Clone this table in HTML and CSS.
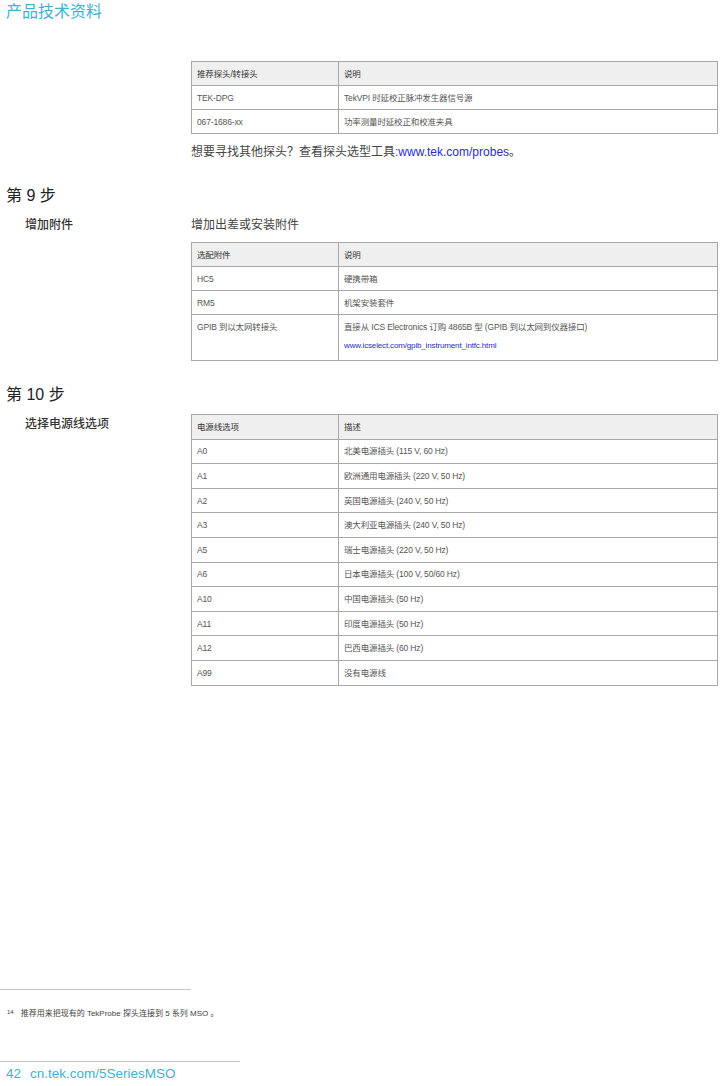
FILE: index.html
```html
<!DOCTYPE html>
<html lang="zh-CN">
<head>
<meta charset="utf-8">
<title>产品技术资料</title>
<link rel="stylesheet" href="styles.css">
</head>
<body>
<div class="page">
  <header class="doc-title">产品技术资料</header>

  <div class="row row-first">
    <div class="side"></div>
    <div class="main">
      <table class="spec">
        <colgroup><col class="c1"><col></colgroup>
        <tr class="head"><th>推荐探头/转接头</th><th>说明</th></tr>
        <tr><td>TEK-DPG</td><td>TekVPI 时延校正脉冲发生器信号源</td></tr>
        <tr><td>067-1686-xx</td><td>功率测量时延校正和校准夹具</td></tr>
      </table>
      <p class="note">想要寻找其他探头？查看探头选型工具:<span class="link">www.tek.com/probes</span>。</p>
    </div>
  </div>

  <h2 class="step step9">第 9 步</h2>
  <div class="row">
    <div class="side"><h3 class="label">增加附件</h3></div>
    <div class="main">
      <p class="intro">增加出差或安装附件</p>
      <table class="spec">
        <colgroup><col class="c1"><col></colgroup>
        <tr class="head"><th>选配附件</th><th>说明</th></tr>
        <tr><td>HC5</td><td>硬携带箱</td></tr>
        <tr><td>RM5</td><td>机架安装套件</td></tr>
        <tr class="tall"><td>GPIB 到以太网转接头</td><td>直接从 ICS Electronics 订购 4865B 型 (GPIB 到以太网到仪器接口)<br><span class="link small">www.icselect.com/gpib_instrument_intfc.html</span></td></tr>
      </table>
    </div>
  </div>

  <h2 class="step step10">第 10 步</h2>
  <div class="row">
    <div class="side"><h3 class="label label10">选择电源线选项</h3></div>
    <div class="main">
      <table class="spec power">
        <colgroup><col class="c1"><col></colgroup>
        <tr class="head"><th>电源线选项</th><th>描述</th></tr>
        <tr><td>A0</td><td>北美电源插头 (115 V, 60 Hz)</td></tr>
        <tr><td>A1</td><td>欧洲通用电源插头 (220 V, 50 Hz)</td></tr>
        <tr><td>A2</td><td>英国电源插头 (240 V, 50 Hz)</td></tr>
        <tr><td>A3</td><td>澳大利亚电源插头 (240 V, 50 Hz)</td></tr>
        <tr><td>A5</td><td>瑞士电源插头 (220 V, 50 Hz)</td></tr>
        <tr><td>A6</td><td>日本电源插头 (100 V, 50/60 Hz)</td></tr>
        <tr><td>A10</td><td>中国电源插头 (50 Hz)</td></tr>
        <tr><td>A11</td><td>印度电源插头 (50 Hz)</td></tr>
        <tr><td>A12</td><td>巴西电源插头 (60 Hz)</td></tr>
        <tr><td>A99</td><td>没有电源线</td></tr>
      </table>
    </div>
  </div>

  <div class="spacer"></div>

  <div class="footnote">
    <hr class="fn-rule">
    <p class="fn-text"><sup>14</sup>推荐用来把现有的 TekProbe 探头连接到 5 系列 MSO 。</p>
  </div>

  <footer class="footer">
    <hr class="foot-rule">
    <p class="foot-text"><span class="pg">42</span>cn.tek.com/5SeriesMSO</p>
  </footer>
</div>
</body>
</html>
```

FILE: styles.css
```css
html, body {
  margin: 0;
  padding: 0;
  background: #fff;
}
body {
  font-family: "Liberation Sans", "Noto Sans CJK SC", sans-serif;
  color: #333;
}
.page {
  width: 720px;
  height: 1086px;
  display: flex;
  flex-direction: column;
  overflow: hidden;
}
.doc-title {
  color: #3fb2ce;
  font-size: 16px;
  line-height: 20px;
  padding: 2px 0 0 6px;
}
.row {
  display: flex;
}
.row-first {
  margin-top: 39px;
}
.side {
  width: 191px;
  flex: none;
}
.main {
  width: 527px;
  flex: none;
}
.spec {
  width: 100%;
  border-collapse: collapse;
  font-size: 8.5px;
  letter-spacing: -0.15px;
  color: #555;
  table-layout: fixed;
}
.spec col.c1 {
  width: 147px;
}
.spec th, .spec td {
  border: 1px solid #a8a8a8;
  text-align: left;
  font-weight: normal;
  padding: 0 5px;
  height: 23px;
  line-height: 12px;
  vertical-align: middle;
}
.spec.power th, .spec.power td {
  height: 23.6px;
}
.spec tr.head th {
  background: #efefef;
  color: #333;
}
.spec tr.tall td {
  height: auto;
  vertical-align: top;
  padding-top: 3px;
  padding-bottom: 5px;
  line-height: 18px;
}
.link {
  color: #2b2bd0;
}
.small {
  font-size: 8px;
}
.note {
  margin: 9px 0 0;
  font-size: 12px;
  line-height: 18px;
  color: #444;
}
.step {
  margin: 0;
  font-weight: normal;
  font-size: 16px;
  line-height: 20px;
  padding-left: 6px;
  color: #222;
}
.step9 {
  margin-top: 25px;
}
.step10 {
  margin-top: 24px;
}
.label {
  margin: 10px 0 0 25px;
  font-size: 12px;
  line-height: 18px;
  font-weight: 500;
  color: #333;
}
.label10 {
  margin-top: 1px;
}
.intro {
  margin: 10px 0 8px;
  font-size: 12px;
  line-height: 18px;
  color: #444;
}
.step10 + .row {
  margin-top: 9px;
}
.spacer {
  flex: 1;
}
.footnote {
  margin-bottom: 41px;
}
.fn-rule {
  margin: 0;
  border: 0;
  border-top: 1px solid #c8c8c8;
  width: 191px;
}
.fn-text {
  margin: 16px 0 0 7px;
  font-size: 8px;
  line-height: 12px;
  color: #444;
}
.fn-text sup {
  font-size: 6px;
  vertical-align: 2px;
  margin-right: 7px;
}
.footer {
  padding-bottom: 3px;
}
.foot-rule {
  margin: 0;
  border: 0;
  border-top: 1px solid #c8c8c8;
  width: 240px;
}
.foot-text {
  margin: 3px 0 0 6px;
  font-size: 13.5px;
  line-height: 18px;
  color: #3fb2ce;
}
.pg {
  margin-right: 9px;
}
```
